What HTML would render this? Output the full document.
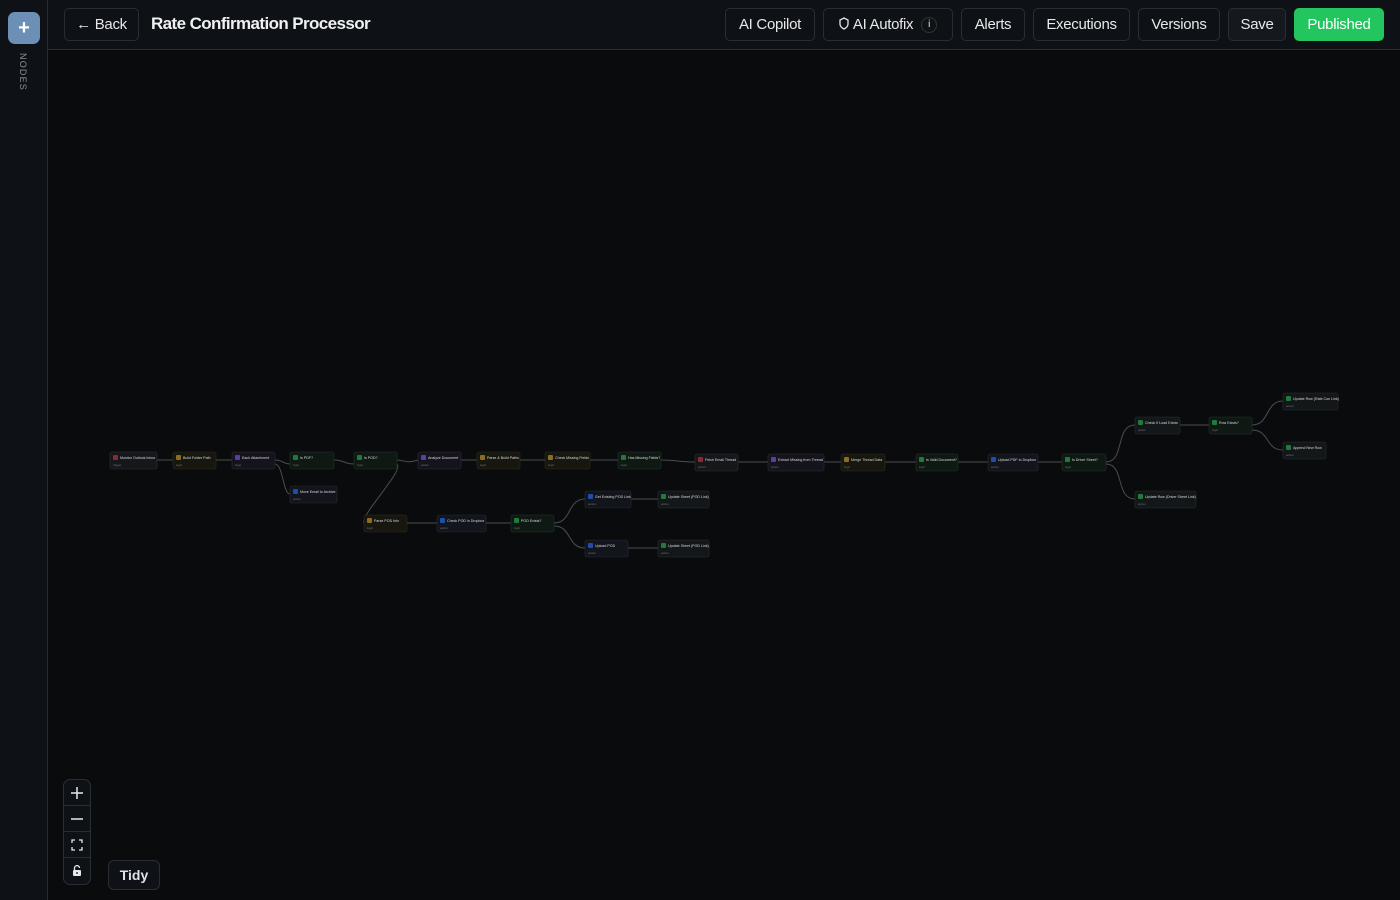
<!DOCTYPE html>
<html><head><meta charset="utf-8"><style>
*{box-sizing:border-box;margin:0;padding:0}
body{width:1400px;height:900px;background:#0a0b0d;font-family:"Liberation Sans",sans-serif;overflow:hidden;position:relative;color:#e6e8eb}
.side{position:absolute;left:0;top:0;width:48px;height:900px;background:#0e1116;border-right:1px solid #262a30}
.plus{position:absolute;left:8px;top:12px;width:32px;height:32px;border-radius:7px;background:#6b8fb5;color:#fff;font-size:20px;font-weight:bold;text-align:center;line-height:32px}
.nodes{position:absolute;left:18px;top:53px;writing-mode:vertical-rl;font-size:9px;letter-spacing:1.2px;color:#8a8f98}
.top{position:absolute;left:48px;top:0;right:0;height:50px;background:#0e1116;border-bottom:1px solid #2a2e34}
.btn{position:absolute;top:8px;height:33px;border:1px solid #2a2e34;border-radius:5px;background:#0e1116;color:#e6e8eb;font-size:15px;line-height:31px;text-align:center;letter-spacing:-0.3px}
.title{position:absolute;left:151px;top:14px;font-size:17px;font-weight:bold;color:#eef0f2;letter-spacing:-0.6px}
.zoom{position:absolute;left:63px;top:779px;width:28px;height:106px;border:1px solid #2a2e34;border-radius:7px;background:#0e1116}
.zoom>div{height:26px;border-bottom:1px solid #2a2e34;color:#ddd;text-align:center;line-height:26px;font-size:16px;position:relative}
.tidy{position:absolute;left:108px;top:860px;width:52px;height:30px;border:1px solid #2a2e34;border-radius:6px;background:#0e1116;font-size:14px;font-weight:bold;text-align:center;line-height:28px;color:#dfe3ea}
svg text{font-family:"Liberation Sans",sans-serif}
</style></head><body>
<div class="side"><div class="plus">+</div><div class="nodes">NODES</div></div>
<div class="top"></div>
<div class="btn" style="left:64px;width:75px">← Back</div>
<div class="title">Rate Confirmation Processor</div>
<div class="btn" style="left:725px;width:90px">AI Copilot</div>
<div class="btn" style="left:823px;width:130px"><svg width="10" height="13" viewBox="0 0 10 13" style="vertical-align:-1px;margin-right:4px"><path d="M5 1L9 3V7C9 9.5 7 11 5 12C3 11 1 9.5 1 7V3Z" fill="none" stroke="#e6e8eb" stroke-width="1.3"/></svg>AI Autofix <span style="display:inline-block;width:16px;height:16px;border:1px solid #333;border-radius:50%;font-size:10px;line-height:14px;vertical-align:middle;margin-left:4px">i</span></div>
<div class="btn" style="left:961px;width:64px">Alerts</div>
<div class="btn" style="left:1033px;width:97px">Executions</div>
<div class="btn" style="left:1138px;width:82px">Versions</div>
<div class="btn" style="left:1228px;width:58px;background:#15191e">Save</div>
<div class="btn" style="left:1294px;width:90px;background:#22c55e;border-color:#22c55e;color:#fff">Published</div>

<svg style="position:absolute;left:0;top:0" width="1400" height="900">
<g fill="none" stroke="#4a4d52" stroke-width="1">
<path d="M157 460H173M216 460H232M275 460C283 460 283 464 290 464M275 464C283 464 283 494 290 494M334 460C344 460 344 464 354 464M397 460C405 460 405 464 418 460M397 464C405 470 360 515 364 523M461 460H477M520 460H545M590 460H618M661 460C675 460 680 462 695 462M738 462H768M824 462H841M885 462H916M958 462H988M1038 462H1062M1106 462C1125 462 1115 425 1135 425M1106 464C1125 464 1115 499 1135 499M1180 425H1209M1252 425C1270 425 1265 401 1283 401M1252 430C1270 430 1265 450 1283 450M407 523H437M486 523H511M554 523C572 523 567 499 585 499M554 526C572 526 567 548 585 548M631 499H658M628 548H658"/>
</g>
<g font-size="3.6" fill="#d8dadd">
<g transform="translate(110,452)"><rect width="47" height="17" rx="2" fill="#15171b" stroke="#2c2f35" stroke-width=".6"/><rect x="3" y="3" width="5" height="5" rx="1" fill="#8a2a2f"/><text x="10" y="6.8">Monitor Outlook Inbox</text><text x="3" y="14" fill="#6b6f75" font-size="3">trigger</text></g>
<g transform="translate(173,452)"><rect width="43" height="17" rx="2" fill="#17160f" stroke="#2e2c22" stroke-width=".6"/><rect x="3" y="3" width="5" height="5" rx="1" fill="#8a6d1e"/><text x="10" y="6.8">Build Folder Path</text><text x="3" y="14" fill="#6b6f75" font-size="3">logic</text></g>
<g transform="translate(232,452)"><rect width="43" height="17" rx="2" fill="#15141c" stroke="#2c2a38" stroke-width=".6"/><rect x="3" y="3" width="5" height="5" rx="1" fill="#5b3fa0"/><text x="10" y="6.8">Each Attachment</text><text x="3" y="14" fill="#6b6f75" font-size="3">logic</text></g>
<g transform="translate(290,452)"><rect width="44" height="17" rx="2" fill="#0f1913" stroke="#213226" stroke-width=".6"/><rect x="3" y="3" width="5" height="5" rx="1" fill="#1f7a3c"/><text x="10" y="6.8">Is PDF?</text><text x="3" y="14" fill="#6b6f75" font-size="3">logic</text></g>
<g transform="translate(354,452)"><rect width="43" height="17" rx="2" fill="#0f1913" stroke="#213226" stroke-width=".6"/><rect x="3" y="3" width="5" height="5" rx="1" fill="#1f7a3c"/><text x="10" y="6.8">Is POD?</text><text x="3" y="14" fill="#6b6f75" font-size="3">logic</text></g>
<g transform="translate(418,452)"><rect width="43" height="17" rx="2" fill="#15141c" stroke="#2c2a38" stroke-width=".6"/><rect x="3" y="3" width="5" height="5" rx="1" fill="#5b3fa0"/><text x="10" y="6.8">Analyze Document</text><text x="3" y="14" fill="#6b6f75" font-size="3">action</text></g>
<g transform="translate(477,452)"><rect width="43" height="17" rx="2" fill="#17160f" stroke="#2e2c22" stroke-width=".6"/><rect x="3" y="3" width="5" height="5" rx="1" fill="#8a6d1e"/><text x="10" y="6.8">Parse &amp; Build Paths</text><text x="3" y="14" fill="#6b6f75" font-size="3">logic</text></g>
<g transform="translate(545,452)"><rect width="45" height="17" rx="2" fill="#17160f" stroke="#2e2c22" stroke-width=".6"/><rect x="3" y="3" width="5" height="5" rx="1" fill="#8a6d1e"/><text x="10" y="6.8">Check Missing Fields</text><text x="3" y="14" fill="#6b6f75" font-size="3">logic</text></g>
<g transform="translate(618,452)"><rect width="43" height="17" rx="2" fill="#0f1913" stroke="#213226" stroke-width=".6"/><rect x="3" y="3" width="5" height="5" rx="1" fill="#1f7a3c"/><text x="10" y="6.8">Has Missing Fields?</text><text x="3" y="14" fill="#6b6f75" font-size="3">logic</text></g>
<g transform="translate(695,454)"><rect width="43" height="17" rx="2" fill="#15171b" stroke="#2c2f35" stroke-width=".6"/><rect x="3" y="3" width="5" height="5" rx="1" fill="#8a2a2f"/><text x="10" y="6.8">Fetch Email Thread</text><text x="3" y="14" fill="#6b6f75" font-size="3">action</text></g>
<g transform="translate(768,454)"><rect width="56" height="17" rx="2" fill="#15141c" stroke="#2c2a38" stroke-width=".6"/><rect x="3" y="3" width="5" height="5" rx="1" fill="#5b3fa0"/><text x="10" y="6.8">Extract Missing from Thread</text><text x="3" y="14" fill="#6b6f75" font-size="3">action</text></g>
<g transform="translate(841,454)"><rect width="44" height="17" rx="2" fill="#17160f" stroke="#2e2c22" stroke-width=".6"/><rect x="3" y="3" width="5" height="5" rx="1" fill="#8a6d1e"/><text x="10" y="6.8">Merge Thread Data</text><text x="3" y="14" fill="#6b6f75" font-size="3">logic</text></g>
<g transform="translate(916,454)"><rect width="42" height="17" rx="2" fill="#0f1913" stroke="#213226" stroke-width=".6"/><rect x="3" y="3" width="5" height="5" rx="1" fill="#1f7a3c"/><text x="10" y="6.8">Is Valid Document?</text><text x="3" y="14" fill="#6b6f75" font-size="3">logic</text></g>
<g transform="translate(988,454)"><rect width="50" height="17" rx="2" fill="#12151c" stroke="#262b36" stroke-width=".6"/><rect x="3" y="3" width="5" height="5" rx="1" fill="#1e4fa8"/><text x="10" y="6.8">Upload PDF to Dropbox</text><text x="3" y="14" fill="#6b6f75" font-size="3">action</text></g>
<g transform="translate(1062,454)"><rect width="44" height="17" rx="2" fill="#0f1913" stroke="#213226" stroke-width=".6"/><rect x="3" y="3" width="5" height="5" rx="1" fill="#1f7a3c"/><text x="10" y="6.8">Is Driver Sheet?</text><text x="3" y="14" fill="#6b6f75" font-size="3">logic</text></g>
<g transform="translate(290,486)"><rect width="47" height="17" rx="2" fill="#12151c" stroke="#262b36" stroke-width=".6"/><rect x="3" y="3" width="5" height="5" rx="1" fill="#1e4fa8"/><text x="10" y="6.8">Move Email to Archive</text><text x="3" y="14" fill="#6b6f75" font-size="3">action</text></g>
<g transform="translate(364,515)"><rect width="43" height="17" rx="2" fill="#17160f" stroke="#2e2c22" stroke-width=".6"/><rect x="3" y="3" width="5" height="5" rx="1" fill="#8a6d1e"/><text x="10" y="6.8">Parse POD Info</text><text x="3" y="14" fill="#6b6f75" font-size="3">logic</text></g>
<g transform="translate(437,515)"><rect width="49" height="17" rx="2" fill="#12151c" stroke="#262b36" stroke-width=".6"/><rect x="3" y="3" width="5" height="5" rx="1" fill="#1e4fa8"/><text x="10" y="6.8">Check POD in Dropbox</text><text x="3" y="14" fill="#6b6f75" font-size="3">action</text></g>
<g transform="translate(511,515)"><rect width="43" height="17" rx="2" fill="#0f1913" stroke="#213226" stroke-width=".6"/><rect x="3" y="3" width="5" height="5" rx="1" fill="#1f7a3c"/><text x="10" y="6.8">POD Exists?</text><text x="3" y="14" fill="#6b6f75" font-size="3">logic</text></g>
<g transform="translate(585,491)"><rect width="46" height="17" rx="2" fill="#12151c" stroke="#262b36" stroke-width=".6"/><rect x="3" y="3" width="5" height="5" rx="1" fill="#1e4fa8"/><text x="10" y="6.8">Get Existing POD Link</text><text x="3" y="14" fill="#6b6f75" font-size="3">action</text></g>
<g transform="translate(658,491)"><rect width="51" height="17" rx="2" fill="#13171a" stroke="#263029" stroke-width=".6"/><rect x="3" y="3" width="5" height="5" rx="1" fill="#1f7a3c"/><text x="10" y="6.8">Update Sheet (POD Link)</text><text x="3" y="14" fill="#6b6f75" font-size="3">action</text></g>
<g transform="translate(585,540)"><rect width="43" height="17" rx="2" fill="#12151c" stroke="#262b36" stroke-width=".6"/><rect x="3" y="3" width="5" height="5" rx="1" fill="#1e4fa8"/><text x="10" y="6.8">Upload POD</text><text x="3" y="14" fill="#6b6f75" font-size="3">action</text></g>
<g transform="translate(658,540)"><rect width="51" height="17" rx="2" fill="#13171a" stroke="#263029" stroke-width=".6"/><rect x="3" y="3" width="5" height="5" rx="1" fill="#1f7a3c"/><text x="10" y="6.8">Update Sheet (POD Link)</text><text x="3" y="14" fill="#6b6f75" font-size="3">action</text></g>
<g transform="translate(1135,417)"><rect width="45" height="17" rx="2" fill="#13171a" stroke="#263029" stroke-width=".6"/><rect x="3" y="3" width="5" height="5" rx="1" fill="#1f7a3c"/><text x="10" y="6.8">Check If Load Exists</text><text x="3" y="14" fill="#6b6f75" font-size="3">action</text></g>
<g transform="translate(1209,417)"><rect width="43" height="17" rx="2" fill="#0f1913" stroke="#213226" stroke-width=".6"/><rect x="3" y="3" width="5" height="5" rx="1" fill="#1f7a3c"/><text x="10" y="6.8">Row Exists?</text><text x="3" y="14" fill="#6b6f75" font-size="3">logic</text></g>
<g transform="translate(1283,393)"><rect width="55" height="17" rx="2" fill="#13171a" stroke="#263029" stroke-width=".6"/><rect x="3" y="3" width="5" height="5" rx="1" fill="#1f7a3c"/><text x="10" y="6.8">Update Row (Rate Con Link)</text><text x="3" y="14" fill="#6b6f75" font-size="3">action</text></g>
<g transform="translate(1283,442)"><rect width="43" height="17" rx="2" fill="#13171a" stroke="#263029" stroke-width=".6"/><rect x="3" y="3" width="5" height="5" rx="1" fill="#1f7a3c"/><text x="10" y="6.8">Append New Row</text><text x="3" y="14" fill="#6b6f75" font-size="3">action</text></g>
<g transform="translate(1135,491)"><rect width="61" height="17" rx="2" fill="#13171a" stroke="#263029" stroke-width=".6"/><rect x="3" y="3" width="5" height="5" rx="1" fill="#1f7a3c"/><text x="10" y="6.8">Update Row (Driver Sheet Link)</text><text x="3" y="14" fill="#6b6f75" font-size="3">action</text></g>
</g>
</svg>

<div class="zoom">
<div><svg width="14" height="14" viewBox="0 0 14 14" style="margin-top:6px"><path d="M7 1V13M1 7H13" stroke="#e6e8eb" stroke-width="1.5"/></svg></div>
<div><svg width="14" height="14" viewBox="0 0 14 14" style="margin-top:6px"><path d="M1 7H13" stroke="#e6e8eb" stroke-width="1.5"/></svg></div>
<div><svg width="12" height="12" viewBox="0 0 12 12" style="margin-top:7px"><path d="M1 4V1H4M8 1H11V4M11 8V11H8M4 11H1V8" fill="none" stroke="#e6e8eb" stroke-width="1.3"/></svg></div>
<div style="border:none"><svg width="12" height="12" viewBox="0 0 12 12" style="margin-top:7px"><path d="M3.5 5V3.2A2.5 2.5 0 0 1 8.5 3" fill="none" stroke="#e6e8eb" stroke-width="1.3"/><rect x="2" y="5" width="8" height="6" rx="1" fill="#e6e8eb"/><rect x="5.4" y="7" width="1.2" height="2" fill="#0e1116"/></svg></div>
</div>
<div class="tidy">Tidy</div>
</body></html>
